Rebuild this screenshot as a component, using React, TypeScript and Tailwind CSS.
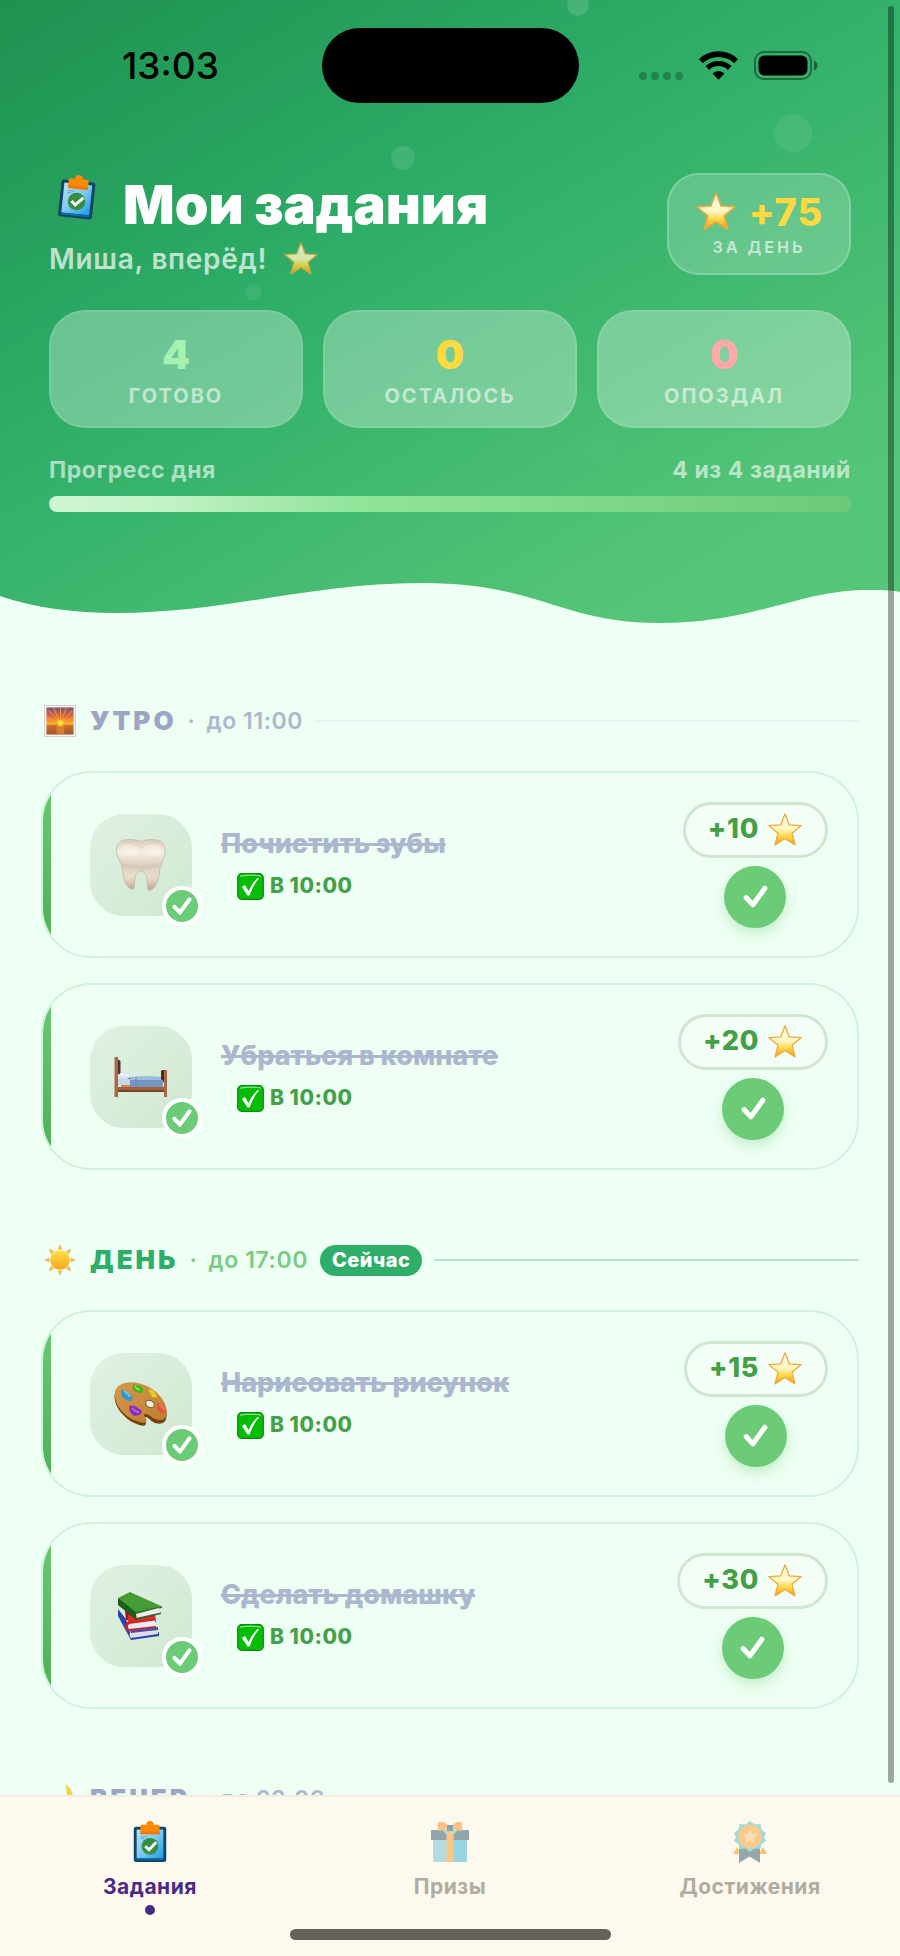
import React, { useId } from "react";

type Art = React.FC<{ className?: string }>;

const Star: Art = ({ className }) => {
  const id = useId();
  return (
    <svg viewBox="0 0 36 36" className={className} aria-hidden="true">
      <defs>
        <linearGradient id={id} x1="0" y1="0" x2="0" y2="1">
          <stop offset="0" stopColor="#fffdf0" />
          <stop offset="0.5" stopColor="#fff6c0" />
          <stop offset="0.72" stopColor="#ffd84a" />
          <stop offset="1" stopColor="#f79a12" />
        </linearGradient>
      </defs>
      <path
        d="M18 1.8 22.3 12.9 34.2 13.6 25 21.2 28 32.9 18 26.5 8 32.9 11 21.2 1.8 13.6 13.7 12.9Z"
        fill={`url(#${id})`}
        stroke="#f0a83c"
        strokeWidth="1.3"
        strokeLinejoin="round"
      />
    </svg>
  );
};

const Clipboard: Art = ({ className }) => {
  const id = useId();
  return (
    <svg viewBox="0 0 36 44" className={className} aria-hidden="true">
      <defs>
        <linearGradient id={id} x1="0" y1="0" x2="1" y2="1">
          <stop offset="0" stopColor="#b5e2f7" />
          <stop offset="0.45" stopColor="#86cdf3" />
          <stop offset="1" stopColor="#1d9be6" />
        </linearGradient>
      </defs>
      <rect x="1" y="6" width="34" height="37" rx="2.5" fill="#0f4468" />
      <rect x="4" y="9" width="28" height="30" fill={`url(#${id})`} />
      <path d="M4 39h28v2H4z" fill="#0b6ea3" />
      <path d="M8 16.5h7M8 18.5h4" stroke="#4b9fcb" strokeWidth="0.8" />
      <path d="M8 5.5q0-1.5 1.5-1.5H14a4 4 0 0 1 8 0h4.500q1.500 0 1.500 1.500V13q0 1-1 1H9q-1 0-1-1Z" fill="#fd8a07" />
      <path d="M8 11h20v2q0 1-1 1H9q-1 0-1-1Z" fill="#ef7905" />
      <circle cx="18" cy="26.5" r="8.8" fill="#348f43" />
      <path d="m13 26.5 4 3.600 7.500-7.800" fill="none" stroke="#fff" strokeWidth="3" />
    </svg>
  );
};

const Tooth: Art = ({ className }) => {
  const id = useId();
  return (
    <svg viewBox="0 0 54 54" className={className} aria-hidden="true">
      <defs>
        <linearGradient id={id} x1="0" y1="0" x2="0" y2="1">
          <stop offset="0" stopColor="#d9cbba" />
          <stop offset="0.25" stopColor="#f6eee2" />
          <stop offset="0.5" stopColor="#ddd0c1" />
          <stop offset="0.75" stopColor="#e9dccb" />
          <stop offset="1" stopColor="#bfa48e" />
        </linearGradient>
      </defs>
      <path
        d="M27 3.5C20 1 12 1 7 3 2 6 1.500 13 4 19c2 4.500 4 8 4.500 13 .8 8 2.500 15 7.500 18.500 2 1.500 4.500.8 4.500-2C20.500 42 21 33 27 33s6.500 9 6.500 16.500c0 2.800 2.500 3.500 4.500 2C43 48 44.700 41 45.500 33 46 28 48.500 24 50 19.500 52.500 13 51 6 47 3.500c-5-2.500-13-2.500-20 0Z"
        fill={`url(#${id})`}
        stroke="#c6b5a4"
        strokeWidth="0.8"
      />
      <path d="M9 27q18 6 36 0" stroke="#cdbeb0" strokeWidth="4" fill="none" opacity="0.4" />
      <ellipse cx="15" cy="12" rx="9" ry="6" fill="#fffaf0" opacity="0.4" />
      <ellipse cx="39" cy="12" rx="9" ry="6" fill="#fffaf0" opacity="0.4" />
    </svg>
  );
};

const Bed: Art = ({ className }) => (
  <svg viewBox="0 0 54 54" className={className} aria-hidden="true">
    <path d="m3.500 9 3 2v13l-3 1Z" fill="#50302a" />
    <path d="M3 27h47v5H3z" fill="#263550" />
    <path d="m4 24 11-1 3 3-4 3H4z" fill="#d5e0ef" />
    <path d="m6 23 8 1 3 2-10 1Z" fill="#eef3fb" />
    <path d="M4 29h13v6H4z" fill="#c9d6e8" />
    <path d="M16 27q16-1 33 0v12H16Z" fill="#7496c1" />
    <path d="M16 27q16-1 33 0v3H16Z" fill="#9dbbdd" />
    <path d="M22 27v9" stroke="#5f82ae" strokeWidth="0.8" />
    <path d="M4 37h46v5H4z" fill="#a3603b" />
    <path d="M4 40h46v2H4z" fill="#7a432b" />
    <rect x="47" y="20" width="6" height="10" rx="1.5" fill="#4c2b26" />
    <rect x="50" y="20" width="3" height="27" rx="0.5" fill="#ab6844" />
    <path d="M7 35h9v2H7z" fill="#d38b56" />
    <rect x="0.5" y="7" width="3.5" height="40" rx="0.5" fill="#ab6844" />
  </svg>
);

const Palette: Art = ({ className }) => {
  const id = useId();
  return (
    <svg viewBox="0 0 54 54" className={className} aria-hidden="true">
      <defs>
        <linearGradient id={id} x1="0" y1="0" x2="1" y2="1">
          <stop offset="0" stopColor="#d49a4c" />
          <stop offset="1" stopColor="#bf7d2f" />
        </linearGradient>
      </defs>
      <path
        d="M2 13C7 5 22 4 35 11c12 7 20 20 17 31-1 5-8 6-13 3-3-2-5-5-8-5-3 .5 1 4 1 6 0 4-5 3-9 1C11 43-2 28 1 16Z"
        fill="#74410f"
      />
      <path
        d="M2 12C7 3.500 22 3 35 10c12 7 20 19 17 29-1 5-8 5-13 2-3-2-5-4-8-4-3 .5 1.500 4 1.500 6 0 4-5 3-9.500 1C11 41-3 26 2 12Z"
        fill={`url(#${id})`}
      />
      <ellipse cx="36" cy="27" rx="4.5" ry="3.5" transform="rotate(20 36 27)" fill="#e5f2e4" stroke="#7d4816" strokeWidth="0.9" />
      <path d="M7 13q6 0 11 7 2 3-2 4-7-1-9-7Z" fill="#3598c9" />
      <path d="M10 14q4 2 6 6" stroke="#7ad0ee" strokeWidth="1.5" fill="none" />
      <path d="M19 7q4 2 8 2 4 4 1 7-5 1-9-3Z" fill="#45b31c" />
      <path d="M21 9q1 3 5 4" stroke="#9cea63" strokeWidth="1.2" fill="none" />
      <path d="M34 12q7 1 9 7-1 3-5 1-2-3-4-8Z" fill="#e8ca22" />
      <path d="M43 26q6 1 9 9-3 3-9-3Z" fill="#e5533f" />
      <path d="M45 28q4 1 5 5" stroke="#ff9585" strokeWidth="1" fill="none" />
      <path d="M15 29q6-2 10 3 3 0 3 4-3 3-7 3-6-2-6-10Z" fill="#8a2fc0" />
      <path d="M18 31q3 4 7 4" stroke="#bd73e5" strokeWidth="1.3" fill="none" />
    </svg>
  );
};

const Books: Art = ({ className }) => (
  <svg viewBox="0 0 54 54" className={className} aria-hidden="true">
    <path d="m4 20 8 10 5 17 28-4v4l-28 4Q12 42 4 27Z" fill="#2d43a8" />
    <path d="m17 43 27-3v5l-27 4q-3-3 0-6Z" fill="#dedee8" />
    <path d="m16 41 28-3v3l-27 3Z" fill="#4f4bb0" />
    <path d="m13 20 28 4 1 9-28 3Z" fill="#e22d26" />
    <path d="m12 31-1-9 4-3-1 12Z" fill="#9d1714" />
    <path d="m14 34 27-3v6l-27 3q-3-3 0-6Z" fill="#ececf2" />
    <path d="m13 33 28-3.500v2L15 35q-2 3 0 5l27-3v1.500L14 42q-5-4-1-9Z" fill="#c72825" />
    <path d="M4 9 16 3l31 14-25 9Z" fill="#459b36" />
    <path d="m4 9 18 14 26-6v2l-26 6L5 11Z" fill="#2f7527" />
    <path d="m4 9 18 15v7L4 16Z" fill="#1d5c1d" />
    <path d="m22 25 23-6v5l-22 6Z" fill="#eeeef1" />
    <path d="m22 29 25-5.500v1.500l-25 6Z" fill="#286224" />
  </svg>
);

const Sunrise: Art = ({ className }) => {
  const id = useId();
  return (
    <svg viewBox="0 0 33 33" className={className} aria-hidden="true">
      <defs>
        <linearGradient id={id} x1="0" y1="0" x2="0" y2="1">
          <stop offset="0" stopColor="#7b5577" />
          <stop offset="0.35" stopColor="#e36a3c" />
          <stop offset="0.62" stopColor="#ffb126" />
          <stop offset="0.66" stopColor="#c9702e" />
          <stop offset="1" stopColor="#a5522f" />
        </linearGradient>
      </defs>
      <rect x="0.5" y="0.5" width="32" height="32" fill="#fbf7f5" stroke="#cdb9b5" strokeWidth="0.7" />
      <rect x="2.5" y="2.5" width="28" height="28" fill={`url(#${id})`} />
      <path
        d="M17 19 3 13M17 19 5 6M17 19 10 3M17 19V3M17 19 23 3M17 19 29 6M17 19l13-6M17 19 3 18M17 19l13-1"
        stroke="#ffb03a"
        strokeWidth="0.9"
        opacity="0.85"
      />
      <path d="M13 21h8v9h-8z" fill="#e58a2c" opacity="0.7" />
      <circle cx="17" cy="18.5" r="3.5" fill="#ffc61e" />
      <circle cx="17" cy="18.5" r="1.8" fill="#fff15a" />
    </svg>
  );
};

const Sun: Art = ({ className }) => {
  const id = useId();
  return (
    <svg viewBox="0 0 32 32" className={className} aria-hidden="true">
      <defs>
        <linearGradient id={id} x1="0" y1="0" x2="0" y2="1">
          <stop offset="0" stopColor="#ffe24a" />
          <stop offset="1" stopColor="#f9a31c" />
        </linearGradient>
      </defs>
      {[0, 45, 90, 135, 180, 225, 270, 315].map((a) => (
        <path key={a} d="m16 0 2.200 5.500h-4.400Z" fill="#f6b545" transform={`rotate(${a} 16 16)`} />
      ))}
      <circle cx="16" cy="16" r="9.8" fill={`url(#${id})`} />
    </svg>
  );
};

const Moon: Art = ({ className }) => (
  <svg viewBox="0 0 32 32" className={className} aria-hidden="true">
    <path d="M21 1c10 6 11 20 3 27-7 5-17 3-21-4 7 3 14 1 18-6 3-6 2-12 0-17Z" fill="#f7cf3f" />
  </svg>
);

const Gift: Art = ({ className }) => (
  <svg viewBox="0 0 40 42" className={className} aria-hidden="true">
    <path d="M3 19h34v21q0 1-1 1H4q-1 0-1-1Z" fill="#b3dbe2" />
    <path d="M23 19h14v21q0 1-1 1H23Z" fill="#97d5e1" />
    <path d="M1 9h38v10H1z" fill="#93a5ab" />
    <path d="m12 9 6 6 2-4 2 4 6-6Z" fill="#9ddcdf" />
    <path d="M16.500 12 20 10l3.500 2v29h-7z" fill="#fcc887" />
    <path d="M8 3q0-3 5-2l5 3v4L9 10Q7 8 8 3ZM32 3q0-3-5-2l-5 3v4l9 2q2-2 1-7Z" fill="#fcc080" />
    <path d="M17 4h6v6h-6z" fill="#87a5ae" />
  </svg>
);

const Medal: Art = ({ className }) => (
  <svg viewBox="0 0 34 42" className={className} aria-hidden="true">
    <path d="m4 26-4 7h8ZM30 26l4 7h-8Z" fill="#fcc27d" />
    <path d="M6 24h21v18l-10.500-6.500L6 42Z" fill="#94a7ab" />
    <path
      d="m17 0 4.500 3.500 6-.5 1 5.500L33 12l-2 4 2 4-4.500 3-1 5-6-.5L17 31l-4.500-3.500-6 .5-1-5L1 20l2-4-2-4 4.500-3.500L6.500 3l6 .5Z"
      fill="#9edcd5"
    />
    <circle cx="17" cy="15.5" r="11.8" fill="#fdca8b" />
    <path d="m17 8 2.200 5 5.300.4-4.100 3.400 1.300 5.200-4.700-2.800-4.700 2.800 1.300-5.200-4.100-3.400 5.300-.4Z" fill="#fde0b7" />
  </svg>
);

const Tick: Art = ({ className }) => (
  <svg viewBox="0 0 24 24" className={className} aria-hidden="true">
    <path d="m3 13 6.500 7L21 4" fill="none" stroke="#fff" strokeWidth="4.8" strokeLinecap="round" strokeLinejoin="round" />
  </svg>
);

const CheckEmoji: Art = ({ className }) => (
  <svg viewBox="0 0 27 27" className={className} aria-hidden="true">
    <rect x="0.7" y="0.7" width="25.6" height="25.6" rx="4" fill="#06bd06" stroke="#078a10" strokeWidth="1.2" />
    <path d="M3 3.200Q13 1 24 3.200" stroke="#8be58b" strokeWidth="1.2" fill="none" />
    <path d="m5 14 3-2 3.500 6q3-7 9-13l1.500.4Q16 12 12.500 22.500h-2Z" fill="#fff" />
  </svg>
);

const Wifi: Art = ({ className }) => (
  <svg viewBox="0 0 39 29" className={className} aria-hidden="true">
    <path d="M1.900 10.200a25.500 25.500 0 0 1 35.200 0" fill="none" stroke="#000" strokeWidth="5.6" />
    <path d="M8.300 17a16.200 16.200 0 0 1 22.400 0" fill="none" stroke="#000" strokeWidth="5.2" />
    <path d="M13.500 22.600a8.400 8.400 0 0 1 12 0l-6 6.200Z" fill="#000" />
  </svg>
);

const Battery: Art = ({ className }) => (
  <svg viewBox="0 0 64 29" className={className} aria-hidden="true">
    <rect x="1" y="1" width="56" height="27" rx="9" fill="none" stroke="#000" strokeOpacity="0.4" strokeWidth="2" />
    <rect x="4.5" y="4.5" width="49" height="20" rx="6" fill="#000" />
    <path d="M60 9.500q3.500 1.500 3.500 5T60 19.500Z" fill="#000" fillOpacity="0.45" />
  </svg>
);

interface Task {
  title: string;
  points: number;
  art: Art;
}
interface Section {
  name: string;
  until: string;
  art: Art;
  current?: boolean;
  tasks: Task[];
}

const sections: Section[] = [
  {
    name: "УТРО",
    until: "11:00",
    art: Sunrise,
    tasks: [
      { title: "Почистить зубы", points: 10, art: Tooth },
      { title: "Убраться в комнате", points: 20, art: Bed },
    ],
  },
  {
    name: "ДЕНЬ",
    until: "17:00",
    art: Sun,
    current: true,
    tasks: [
      { title: "Нарисовать рисунок", points: 15, art: Palette },
      { title: "Сделать домашку", points: 30, art: Books },
    ],
  },
  { name: "ВЕЧЕР", until: "22:00", art: Moon, tasks: [] },
];

const stats = [
  { value: 4, label: "ГОТОВО", color: "text-[#a5f2b0]" },
  { value: 0, label: "ОСТАЛОСЬ", color: "text-[#ffd93d]" },
  { value: 0, label: "ОПОЗДАЛ", color: "text-[#ffa8a8]" },
];

const bubbles = [
  "left-[567px] -top-[6px] size-[22px] bg-white/13",
  "left-[774px] top-[114px] size-[38px] bg-white/8",
  "left-[391px] top-[146px] size-[24px] bg-white/11",
  "left-[245px] top-[284px] size-[16px] bg-white/8",
  "left-[582px] top-[428px] size-[36px] bg-white/2",
];

function StatusBar() {
  return (
    <div className="grid grid-cols-[1fr_257px_1fr] items-center pt-7">
      <span className="pl-[122px] text-[37px] leading-[44px] font-medium text-black">13:03</span>
      <div className="h-[75px] rounded-full bg-black" />
      <div className="flex items-center gap-4 pl-[60px]">
        <div className="flex gap-1 pt-5">
          {[0, 1, 2, 3].map((i) => (
            <i key={i} className="size-2 rounded-full bg-black/25" />
          ))}
        </div>
        <Wifi className="h-[29px] w-[39px]" />
        <Battery className="h-[29px] w-16" />
      </div>
    </div>
  );
}

function Header() {
  return (
    <header className="relative shrink-0 overflow-hidden bg-[linear-gradient(150deg,#1f9150_0%,#2dad67_38%,#52c377_80%,#57c87b_100%)]">
      {bubbles.map((b) => (
        <i key={b} className={`absolute rounded-full ${b}`} />
      ))}
      <div className="relative">
        <StatusBar />
        <div className="px-[49px] pt-[70px]">
          <div className="flex items-start justify-between">
            <div>
              <h1 className="flex items-center gap-7 pl-[10px] text-[54px] leading-[64px] font-black whitespace-nowrap text-white">
                <Clipboard className="mb-4 h-11 w-9 rotate-6" />
                Мои задания
              </h1>
              <p className="flex items-center gap-4 text-[28px] leading-[44px] font-semibold tracking-wide text-white/70">
                Миша, вперёд!
                <Star className="size-9 opacity-80" />
              </p>
            </div>
            <div className="flex h-[102px] w-[184px] flex-col items-center justify-center rounded-[32px] border-2 border-white/20 bg-white/20">
              <div className="flex items-center gap-3 text-[38px] leading-[46px] font-extrabold tracking-wide text-[#ffd93d]">
                <Star className="size-[42px]" />
                +75
              </div>
              <span className="text-[16px] leading-6 font-bold tracking-[3px] text-white/60">ЗА ДЕНЬ</span>
            </div>
          </div>

          <dl className="mt-[29px] grid grid-cols-3 gap-5">
            {stats.map((s) => (
              <div
                key={s.label}
                className="flex h-[118px] flex-col-reverse items-center justify-center rounded-[36px] border-2 border-white/10 bg-white/30"
              >
                <dt className="text-[20px] leading-7 font-bold tracking-[2px] text-white/55">{s.label}</dt>
                <dd className={`text-[40px] leading-[54px] font-black ${s.color}`}>{s.value}</dd>
              </div>
            ))}
          </dl>

          <div className="mt-7 flex justify-between text-[23px] leading-7 font-bold tracking-wide text-white/60">
            <span id="day-progress">Прогресс дня</span>
            <span>4 из 4 заданий</span>
          </div>
          <div
            role="progressbar"
            aria-labelledby="day-progress"
            aria-valuenow={4}
            aria-valuemax={4}
            className="mt-3 h-4 rounded-full bg-[linear-gradient(90deg,#d0f6d4_0%,#c0f2c5_15%,#92e49b_38%,#6bcb77_100%)]"
          />
        </div>
        <svg viewBox="0 0 900 44" preserveAspectRatio="none" className="mt-[69px] block h-11 w-full" aria-hidden="true">
          <path
            d="M0 15C35 27 75 32 117 32 225 32 310 2 422 2 540 2 560 42 660 42 755 42 800 9 867 9 880 9 890 9 900 11V44H0Z"
            fill="#eefff3"
          />
        </svg>
      </div>
    </header>
  );
}

function TaskCard({ task }: { task: Task }) {
  const Icon = task.art;
  return (
    <li className="relative flex h-[187px] items-center overflow-hidden rounded-[50px] border-2 border-[#d0f1db] pr-[29px] pl-[47px]">
      <i className="absolute -top-0.5 -bottom-0.5 -left-0.5 w-[10px] bg-linear-to-b from-[#6bcb77] to-[#4caf50]" />
      <div className="relative flex size-[102px] shrink-0 items-center justify-center rounded-[34px] bg-linear-to-br from-[#e0f1e2] to-[#cfe9d2]">
        <Icon className="size-[54px]" />
        <span className="absolute -right-[10px] -bottom-[10px] flex size-10 items-center justify-center rounded-full border-4 border-white bg-[#6bcb77]">
          <Tick className="size-5" />
        </span>
      </div>
      <div className="ml-[29px] flex-1 pt-[3px]">
        <h3 className="text-[27px] leading-9 font-extrabold text-[#aab7ce] line-through decoration-[3px]">{task.title}</h3>
        <p className="mt-1 flex items-center gap-[6px] pl-4 text-[21px] leading-10 font-extrabold tracking-wide text-[#459f4b]">
          <CheckEmoji className="size-[27px]" />В 10:00
        </p>
      </div>
      <div className="flex flex-col items-center gap-2">
        <span className="flex h-14 items-center gap-2 rounded-full border-3 border-[#cfe6d0] bg-[#f3fff6] px-[22px] text-[27px] font-extrabold tracking-wide text-[#43a047]">
          +{task.points}
          <Star className="size-9" />
        </span>
        <button
          type="button"
          aria-label={`${task.title}: выполнено`}
          aria-pressed="true"
          className="flex size-[62px] items-center justify-center rounded-full bg-[#6bcb77] shadow-[0_6px_12px_rgba(107,203,119,0.3)]"
        >
          <Tick className="size-[25px]" />
        </button>
      </div>
    </li>
  );
}

function DaySection({ section }: { section: Section }) {
  const Icon = section.art;
  const on = section.current;
  return (
    <section className="mb-[72px]">
      <div className="mb-8 flex h-9 items-center pl-[3px]">
        <Icon className="size-[32px] shrink-0" />
        <h2 className={`ml-[14px] text-[26px] leading-9 font-black tracking-[3px] ${on ? "text-[#2eae69]" : "text-[#9ca5c4]"}`}>
          {section.name}
        </h2>
        <span
          className={`ml-[11px] flex gap-[11px] text-[23px] leading-9 font-semibold tracking-wide ${on ? "text-[#7acb85]" : "text-[#adb7ce]"}`}
        >
          <span>·</span>
          <span>до {section.until}</span>
        </span>
        {on && (
          <span className="ml-3 rounded-full bg-[#2eae69] px-3 text-[20px] leading-[31px] font-extrabold tracking-wide text-white">
            Сейчас
          </span>
        )}
        <i className={`ml-3 h-0.5 flex-1 ${on ? "bg-[#b8e6cd]" : "bg-[#e4f4fa]"}`} />
      </div>
      <ul className="flex flex-col gap-[25px]">
        {section.tasks.map((t) => (
          <TaskCard key={t.title} task={t} />
        ))}
      </ul>
    </section>
  );
}

const tabs = [
  { name: "Задания", art: Clipboard, active: true },
  { name: "Призы", art: Gift, active: false },
  { name: "Достижения", art: Medal, active: false },
];

function TabBar() {
  return (
    <nav className="shrink-0 border-t-2 border-[#f3efdf] bg-[#fef9ee] pt-6 pb-4">
      <div className="grid grid-cols-3">
        {tabs.map((t) => (
          <a
            key={t.name}
            href="#"
            aria-current={t.active ? "page" : undefined}
            className={`flex flex-col items-center text-[21px] leading-7 font-bold tracking-wide ${t.active ? "text-[#472b88]" : "text-[#b0aca1]"}`}
          >
            <t.art className="mb-[10px] h-[42px] w-10" />
            {t.name}
            <i className={`mt-1 size-[10px] rounded-full ${t.active ? "bg-[#472b88]" : ""}`} />
          </a>
        ))}
      </div>
      <div className="mx-auto mt-[14px] h-[11px] w-[321px] rounded-full bg-[#64625b]" />
    </nav>
  );
}

export default function App() {
  return (
    <div className="relative flex h-screen flex-col overflow-hidden bg-[#eefff3] font-['Inter','Noto_Sans',sans-serif]">
      <Header />
      <main className="min-h-0 flex-1 overflow-hidden px-[41px] pt-[78px]">
        {sections.map((s) => (
          <DaySection key={s.name} section={s} />
        ))}
      </main>
      <TabBar />
      <i className="absolute top-[6px] right-[6px] bottom-[173px] w-[6px] rounded-full bg-black/35" />
    </div>
  );
}
